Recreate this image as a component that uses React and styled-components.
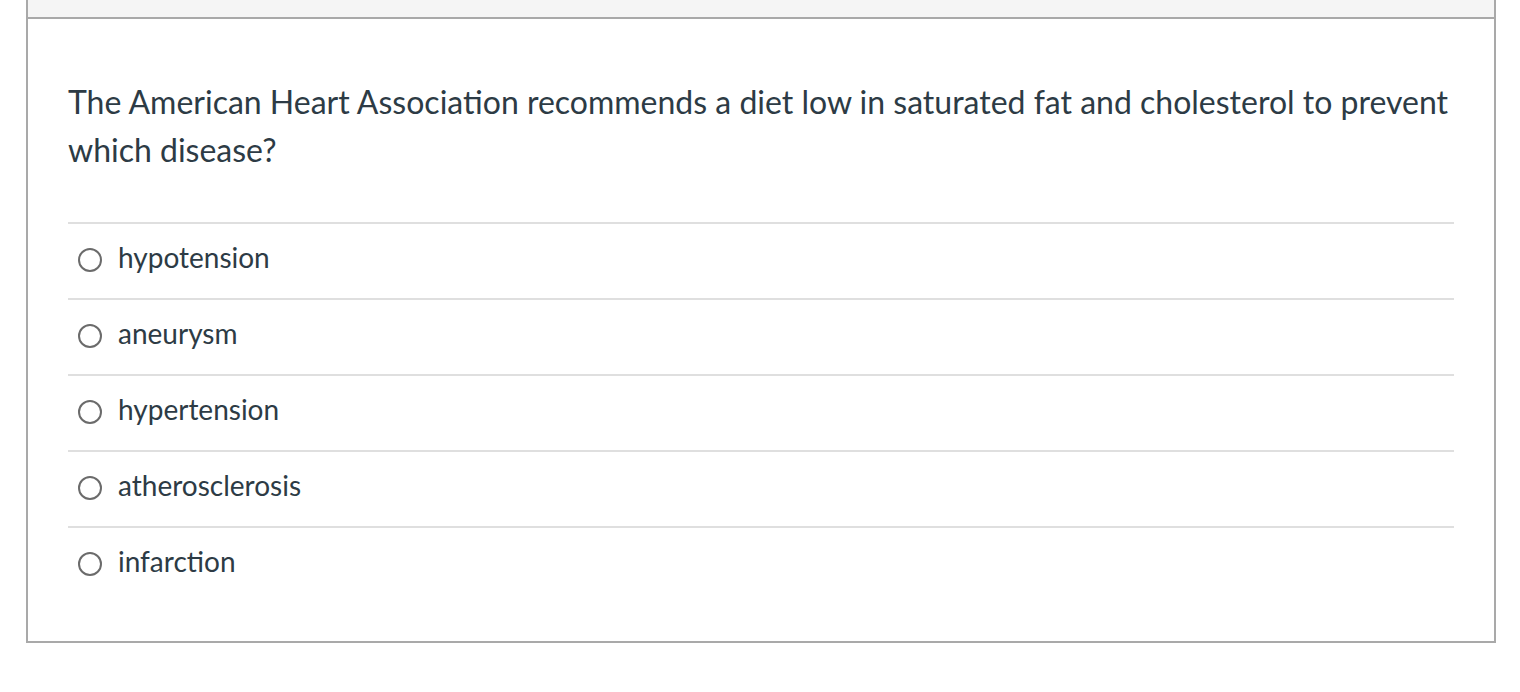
import React from 'react';
import styled, { createGlobalStyle } from 'styled-components';

const GlobalStyle = createGlobalStyle`
  body {
    margin: 0;
    background: #ffffff;
    font-family: Lato, 'Noto Sans', sans-serif;
    color: #2d3b45;
  }
`;

const Page = styled.div`
  padding-left: 26px;
  width: 1470px;
`;

const Card = styled.div`
  border: 2px solid #a9a9a9;
  border-top: none;
  background: #ffffff;
`;

const Header = styled.div`
  height: 17px;
  background: #f5f5f5;
  border-bottom: 2px solid #a9a9a9;
`;

const Body = styled.div`
  padding: 59px 40px 39px 40px;
`;

const Question = styled.p`
  margin: 0 0 48px 0;
  font-size: 32px;
  line-height: 48px;
`;

const Answers = styled.div`
  display: flex;
  flex-direction: column;
`;

const Answer = styled.label`
  display: flex;
  align-items: center;
  gap: 16px;
  box-sizing: border-box;
  height: 76px;
  padding-left: 10px;
  padding-bottom: 9px;
  border-top: 2px solid #dfdfdf;
  font-size: 28px;
`;

const Radio = styled.span`
  width: 24px;
  height: 24px;
  box-sizing: border-box;
  border: 2px solid #6b6b6b;
  border-radius: 50%;
  flex-shrink: 0;
  margin-top: 7px;
`;

const options = ['hypotension', 'aneurysm', 'hypertension', 'atherosclerosis', 'infarction'];

export default function App() {
  return (
    <Page>
      <GlobalStyle />
      <Card>
        <Header />
        <Body>
          <Question>
            The American Heart Association recommends a diet low in saturated fat and cholesterol to prevent which disease?
          </Question>
          <Answers>
            {options.map((o) => (
              <Answer key={o}>
                <Radio />
                {o}
              </Answer>
            ))}
          </Answers>
        </Body>
      </Card>
    </Page>
  );
}
